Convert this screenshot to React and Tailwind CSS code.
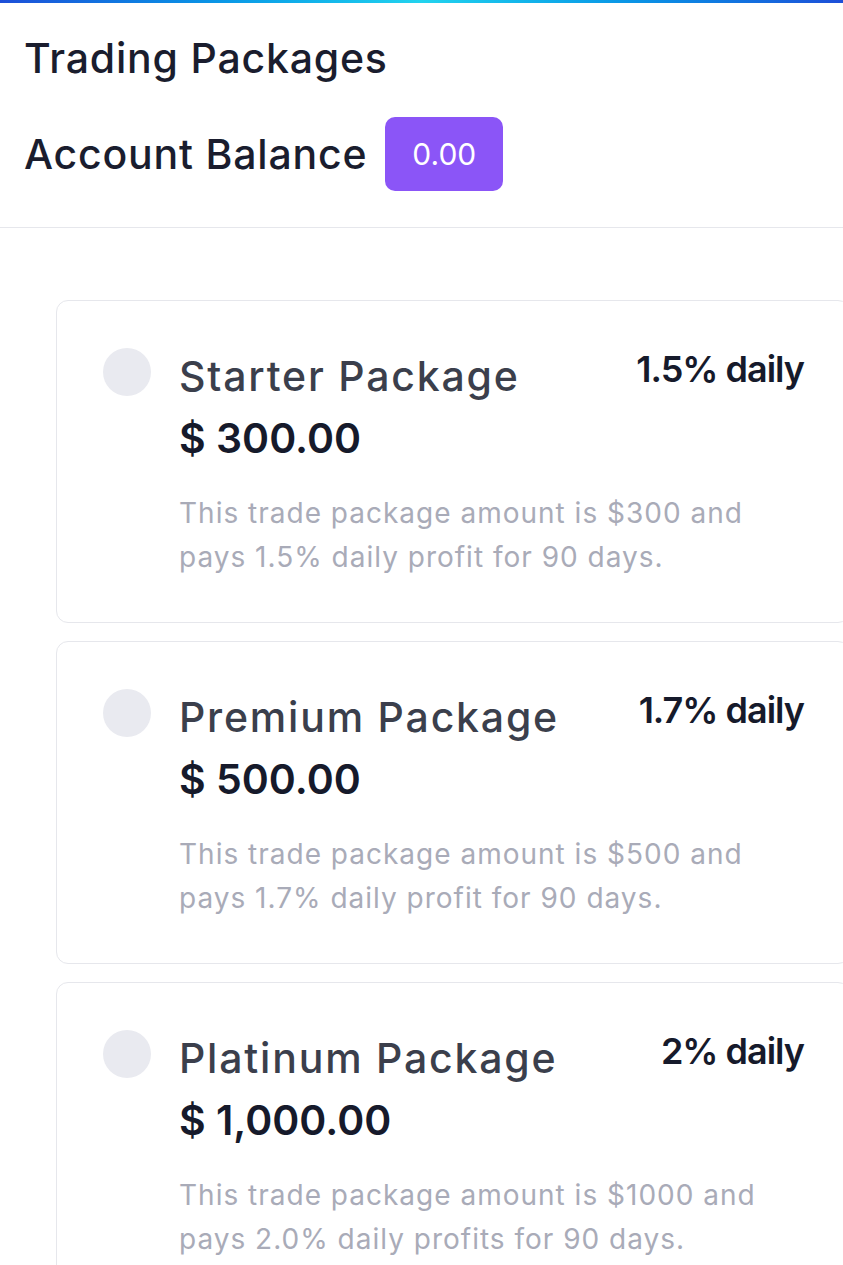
import React from 'react';

const packages = [
  {
    name: 'Starter Package',
    rate: '1.5% daily',
    price: '$ 300.00',
    desc: 'This trade package amount is $300 and pays 1.5% daily profit for 90 days.',
  },
  {
    name: 'Premium Package',
    rate: '1.7% daily',
    price: '$ 500.00',
    desc: 'This trade package amount is $500 and pays 1.7% daily profit for 90 days.',
  },
  {
    name: 'Platinum Package',
    rate: '2% daily',
    price: '$ 1,000.00',
    desc: 'This trade package amount is $1000 and pays 2.0% daily profits for 90 days.',
  },
];

const PackageCard = ({ pkg }) => (
  <div className="w-[794px] rounded-xl border border-[#e6e7ec] bg-white pt-[47px] pb-[43px] pl-[46px] pr-[45px]">
    <div className="flex">
      <div className="h-[48px] w-[48px] flex-shrink-0 rounded-full bg-[#e9eaf0]"></div>
      <div className="ml-[28px] flex-1">
        <div className="flex items-start justify-between">
          <p className="text-[41px] leading-[56px] font-medium text-[#3b3f4c] tracking-[1.8px]">{pkg.name}</p>
          <p className="text-[36px] leading-[42px] font-semibold text-[#161a2b] tracking-[-1px]">{pkg.rate}</p>
        </div>
        <p className="mt-[6px] text-[41px] leading-[56px] font-semibold text-[#161a2b]">{pkg.price}</p>
        <p className="mt-[25px] w-[600px] text-[28px] leading-[44px] text-[#a9abb8] tracking-[1px]">{pkg.desc}</p>
      </div>
    </div>
  </div>
);

export default function App() {
  return (
    <div className="min-h-[1265px] w-[843px] overflow-hidden bg-white font-['Inter',sans-serif]">
      <div className="h-[3px] bg-gradient-to-r from-[#1d4ed8] via-[#22d3ee] to-[#1d4ed8]"></div>

      {/* Header */}
      <div className="px-[24px] pt-[27px]">
        <h1 className="text-[41px] leading-[56px] font-medium text-[#1a1d2e] tracking-[0.8px]">Trading Packages</h1>
        <div className="mt-[31px] flex items-center">
          <span className="text-[41px] leading-[56px] font-medium text-[#1a1d2e] tracking-[0.8px]">Account Balance</span>
          <span className="ml-[18px] flex h-[74px] w-[118px] items-center justify-center rounded-[10px] bg-[#8b55f7] text-[30px] text-white">
            0.00
          </span>
        </div>
      </div>
      <div className="mt-[36px] h-px bg-[#e6e7ec]"></div>

      {/* Packages */}
      <div className="ml-[56px] mt-[72px] flex flex-col gap-[18px]">
        {packages.map((pkg) => (
          <PackageCard key={pkg.name} pkg={pkg} />
        ))}
      </div>
    </div>
  );
}
